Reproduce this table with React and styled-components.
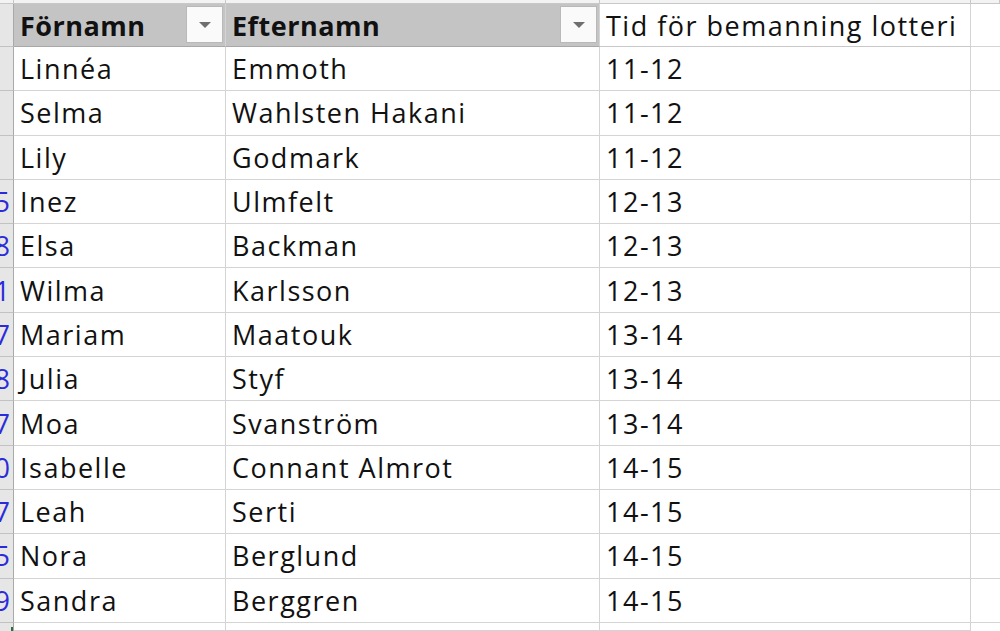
import styled, { createGlobalStyle } from "styled-components";

const GlobalStyle = createGlobalStyle`
  html, body {
    margin: 0;
    padding: 0;
    background: #ffffff;
    overflow: hidden;
  }
`;

const rows = [
  ["", "Linnéa", "Emmoth", "11-12"],
  ["", "Selma", "Wahlsten Hakani", "11-12"],
  ["", "Lily", "Godmark", "11-12"],
  ["15", "Inez", "Ulmfelt", "12-13"],
  ["18", "Elsa", "Backman", "12-13"],
  ["21", "Wilma", "Karlsson", "12-13"],
  ["27", "Mariam", "Maatouk", "13-14"],
  ["28", "Julia", "Styf", "13-14"],
  ["37", "Moa", "Svanström", "13-14"],
  ["40", "Isabelle", "Connant Almrot", "14-15"],
  ["47", "Leah", "Serti", "14-15"],
  ["55", "Nora", "Berglund", "14-15"],
  ["59", "Sandra", "Berggren", "14-15"],
];

const Sheet = styled.div`
  display: grid;
  grid-template-columns: 14px 212px 374px 371px 1fr;
  grid-template-rows: 4px 43px repeat(13, 44.3px) 1fr;
  width: 1000px;
  height: 631px;
  font-family: "Open Sans", Lato, sans-serif;
  font-size: 27px;
  letter-spacing: 1.5px;
  color: #111111;
  overflow: hidden;
`;

const Strip = styled.div`
  background: #f3f3f3;
  border-right: 1px solid #c8c8c8;
  border-bottom: 1px solid #c8c8c8;
`;

const RowHead = styled.div`
  background: #e6e6e6;
  border-right: 1px solid #a9a9a9;
  border-bottom: 1px solid #c2c2c2;
  display: flex;
  align-items: center;
  justify-content: flex-end;
  overflow: hidden;
  padding-right: 3px;
  color: #2b2bd9;
  white-space: nowrap;
  letter-spacing: 0;
`;

const Cell = styled.div`
  display: flex;
  align-items: center;
  padding: 0 6px;
  border-right: 1px solid #d4d4d4;
  border-bottom: 1px solid #d4d4d4;
  white-space: nowrap;
  overflow: hidden;
  background: #ffffff;
`;

const HeadCell = styled(Cell)`
  position: relative;
  background: ${(p) => (p.$plain ? "#ffffff" : "#c4c4c4")};
  font-weight: ${(p) => (p.$plain ? 400 : 700)};
  letter-spacing: ${(p) => (p.$plain ? "1.5px" : "0.5px")};
  border-bottom: 1px solid ${(p) => (p.$plain ? "#c8c8c8" : "#a8a8a8")};
`;

const FilterButton = styled.span`
  position: absolute;
  right: 2px;
  top: 2px;
  width: 37px;
  height: 37px;
  box-sizing: border-box;
  background: #fafafa;
  border: 1px solid #b9b9b9;
  display: flex;
  align-items: center;
  justify-content: center;

  &::after {
    content: "";
    border-left: 6px solid transparent;
    border-right: 6px solid transparent;
    border-top: 6px solid #6f6f6f;
  }
`;

const Tail = styled.div`
  border-bottom: 1px solid #d4d4d4;
`;

const SelectMark = styled.div`
  background: #e6e6e6;
  border-right: 1px solid #a9a9a9;
  position: relative;

  &::after {
    content: "";
    position: absolute;
    right: 0;
    bottom: 0;
    width: 2px;
    height: 4px;
    background: #217346;
  }
`;

export default function App() {
  return (
    <>
      <GlobalStyle />
      <Sheet>
        <Strip />
        <Strip />
        <Strip />
        <Strip />
        <Strip />

        <RowHead />
        <HeadCell>
          Förnamn
          <FilterButton />
        </HeadCell>
        <HeadCell>
          Efternamn
          <FilterButton />
        </HeadCell>
        <HeadCell $plain>Tid för bemanning lotteri</HeadCell>
        <Tail />

        {rows.map(([num, first, last, time]) => (
          <>
            <RowHead key={first + "-n"}>{num}</RowHead>
            <Cell key={first + "-f"}>{first}</Cell>
            <Cell key={first + "-l"}>{last}</Cell>
            <Cell key={first + "-t"}>{time}</Cell>
            <Tail key={first + "-x"} />
          </>
        ))}

        <SelectMark />
        <Cell />
        <Cell />
        <Cell />
        <div />
      </Sheet>
    </>
  );
}
